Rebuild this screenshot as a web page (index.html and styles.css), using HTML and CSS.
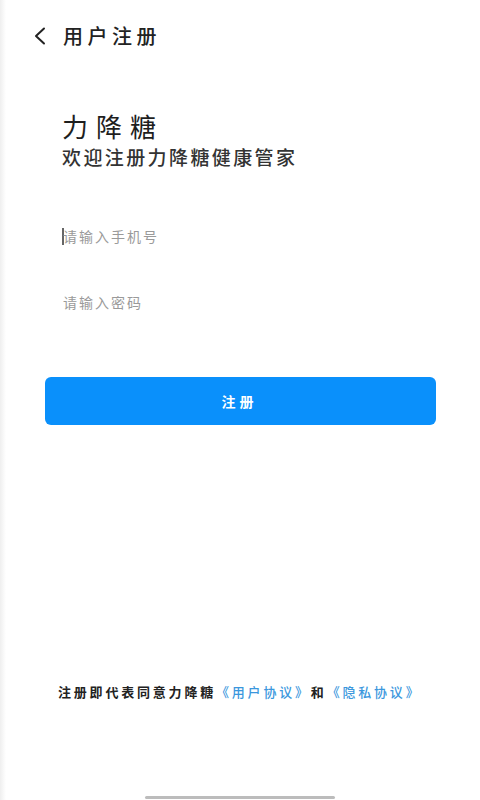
FILE: index.html
```html
<!DOCTYPE html>
<html>
<head>
  <meta charset="utf-8">
  <title>用户注册</title>
  <link rel="stylesheet" href="styles.css">
</head>
<body>
  <div class="page">
    <div class="top-bar">
      <span class="back">
        <svg width="14" height="18" viewBox="0 0 14 18">
          <path d="M11 1.5 L3 9 L11 16.5" fill="none" stroke="#222" stroke-width="2" stroke-linecap="round" stroke-linejoin="round"/>
        </svg>
      </span>
      <span class="top-title">用户注册</span>
    </div>

    <div class="intro">
      <div class="app-name">力降糖</div>
      <div class="welcome">欢迎注册力降糖健康管家</div>
    </div>

    <div class="form">
      <div class="field">
        <span class="caret"></span>
        <input type="text" class="form-input" placeholder="请输入手机号">
      </div>
      <div class="field">
        <input type="password" class="form-input" placeholder="请输入密码">
      </div>
      <button class="form-button">注册</button>
    </div>

    <div class="agreement">
      注册即代表同意力降糖<a href="#">《用户协议》</a>和<a href="#">《隐私协议》</a>
    </div>

    <div class="home-bar"></div>
  </div>
</body>
</html>
```

FILE: styles.css
```css
html, body {
  margin: 0;
  padding: 0;
}

body {
  background: linear-gradient(to right, #efefef 0, #ffffff 6px);
  font-family: "Noto Sans CJK SC", "Noto Sans", sans-serif;
  color: #222;
}

.page {
  min-height: 800px;
  display: flex;
  flex-direction: column;
}

.top-bar {
  height: 72px;
  display: flex;
  align-items: center;
  padding-left: 33px;
}

.back {
  display: flex;
  width: 30px;
}

.top-title {
  font-size: 20px;
  font-weight: 500;
  letter-spacing: 4.5px;
  line-height: 24px;
}

.intro {
  padding-left: 62px;
  margin-top: 39px;
}

.app-name {
  font-size: 26px;
  line-height: 30px;
  letter-spacing: 8px;
  color: #1e1e1e;
}

.welcome {
  margin-top: 4px;
  font-size: 19px;
  line-height: 24px;
  letter-spacing: 2.4px;
  font-weight: 500;
  color: #333;
}

.form {
  margin-top: 34px;
  padding: 0 44px 0 45px;
}

.field {
  height: 66px;
  display: flex;
  align-items: center;
  padding-left: 17px;
}

.caret {
  width: 2px;
  height: 17px;
  background-color: #666;
  margin-right: -2px;
}

.form-input {
  flex: 1;
  border: none;
  outline: none;
  background: transparent;
  padding: 0 0 0 1px;
  font-family: inherit;
  font-size: 14px;
  line-height: 20px;
  letter-spacing: 2px;
  color: #333;
}

.form-input::placeholder {
  color: #9a9a9a;
}

.form-button {
  display: block;
  width: 100%;
  height: 48px;
  margin-top: 42px;
  background-color: #0a90fb;
  color: #fff;
  border: none;
  border-radius: 6px;
  font-family: inherit;
  font-size: 14px;
  font-weight: 700;
  letter-spacing: 4px;
  padding-left: 4px;
  cursor: pointer;
}

.agreement {
  margin-top: auto;
  padding-left: 58px;
  font-size: 13px;
  line-height: 20px;
  font-weight: 700;
  letter-spacing: 2.8px;
  color: #222;
}

.agreement a {
  color: #3b97dd;
  text-decoration: none;
  font-weight: 500;
}

.home-bar {
  width: 190px;
  height: 3px;
  margin: 94px auto 1px;
  background-color: #bcbcbc;
  border-radius: 2px;
}
```
